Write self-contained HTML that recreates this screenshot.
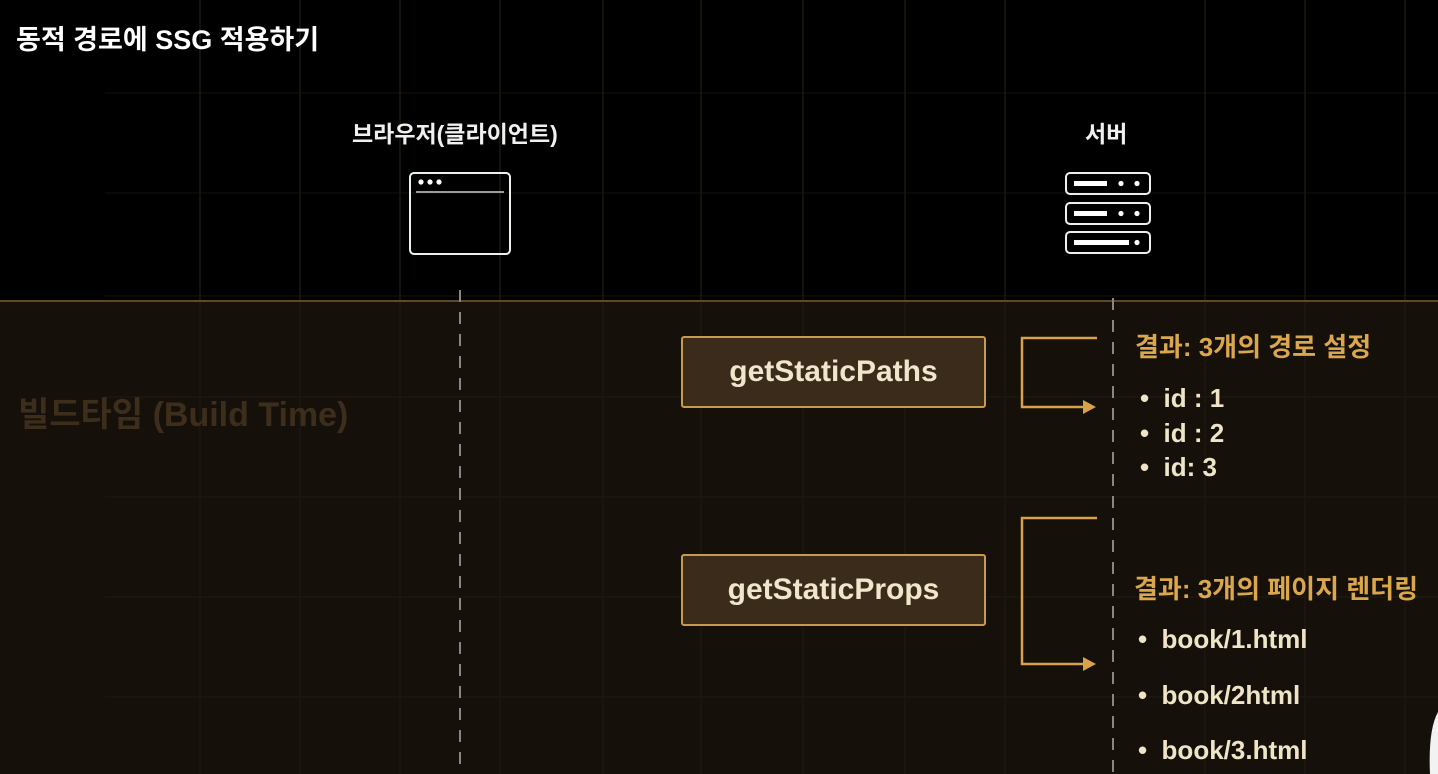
<!DOCTYPE html>
<html><head><meta charset="utf-8"><style>
html,body{margin:0;padding:0}
body{width:1438px;height:774px;overflow:hidden;background:#000;position:relative;font-family:"Liberation Sans","Noto Sans CJK KR",sans-serif}
.abs{position:absolute;white-space:nowrap}
.bottom{position:absolute;left:0;top:301px;width:1438px;height:473px;background:#16100b}
.box{position:absolute;left:681px;width:301px;height:68px;border:2px solid #c99a4e;border-radius:3px;background:#3a2b1b;color:#f0e6cc;font-size:30px;font-weight:bold;display:flex;align-items:center;justify-content:center}
.gold{color:#dba74c;font-weight:bold;font-size:26px}
.it{color:#efe4c6;font-size:26px;font-weight:bold}
</style></head><body>
<div class="bottom"></div>
<svg class="abs" style="left:0;top:0" width="1438" height="774">
<g stroke="#0d0c0a" stroke-width="1.5">
<line x1="105" y1="93" x2="1438" y2="93"/><line x1="105" y1="193" x2="1438" y2="193"/><line x1="105" y1="296" x2="1438" y2="296"/>
</g>
<g stroke="#1e170f" stroke-width="1.5">
<line x1="105" y1="397" x2="1438" y2="397"/><line x1="105" y1="497" x2="1438" y2="497"/><line x1="105" y1="597" x2="1438" y2="597"/><line x1="105" y1="697" x2="1438" y2="697"/>
<line x1="200" y1="0" x2="200" y2="774"/><line x1="300" y1="0" x2="300" y2="774"/><line x1="400" y1="0" x2="400" y2="774"/><line x1="500" y1="0" x2="500" y2="774"/><line x1="603" y1="0" x2="603" y2="774"/><line x1="701" y1="0" x2="701" y2="774"/><line x1="803" y1="0" x2="803" y2="774"/><line x1="905" y1="0" x2="905" y2="774"/><line x1="1005" y1="0" x2="1005" y2="774"/><line x1="1205" y1="0" x2="1205" y2="774"/><line x1="1305" y1="0" x2="1305" y2="774"/><line x1="1405" y1="0" x2="1405" y2="774"/>
</g>
<line x1="0" y1="301" x2="1438" y2="301" stroke="#5e4826" stroke-width="2"/>
<line x1="460" y1="290" x2="460" y2="774" stroke="#8a8680" stroke-width="2" stroke-dasharray="12,10"/>
<line x1="1113" y1="298" x2="1113" y2="774" stroke="#8a8680" stroke-width="2" stroke-dasharray="12,10"/>
<g stroke="#d7a24a" stroke-width="2.5" fill="none">
<path d="M1097 338 H1022 V407 H1085"/>
<path d="M1097 518 H1022 V664 H1085"/>
</g>
<path d="M1083 400 L1096 407 L1083 414Z" fill="#d7a24a"/>
<path d="M1083 657 L1096 664 L1083 671Z" fill="#d7a24a"/>
<rect x="410" y="173" width="100" height="81" rx="4" fill="none" stroke="#eee" stroke-width="2"/>
<line x1="416" y1="192" x2="504" y2="192" stroke="#ccc" stroke-width="1.5"/>
<circle cx="421" cy="182" r="2.6" fill="#fff"/><circle cx="430" cy="182" r="2.6" fill="#fff"/><circle cx="439" cy="182" r="2.6" fill="#fff"/>
<g fill="none" stroke="#eee" stroke-width="2">
<rect x="1066" y="173" width="84" height="21" rx="4"/><rect x="1066" y="203" width="84" height="21" rx="4"/><rect x="1066" y="232" width="84" height="21" rx="4"/>
</g>
<g fill="#fff">
<rect x="1074" y="181" width="33" height="5"/><circle cx="1121" cy="183.5" r="2.6"/><circle cx="1137" cy="183.5" r="2.6"/>
<rect x="1074" y="211" width="33" height="5"/><circle cx="1121" cy="213.5" r="2.6"/><circle cx="1137" cy="213.5" r="2.6"/>
<rect x="1074" y="240" width="55" height="5"/><circle cx="1137" cy="242.5" r="2.6"/>
</g>
<path d="M1438 712 Q1428 730 1430 774 L1438 774Z" fill="#f2f2f2"/>
</svg>
<div class="abs" style="left:16px;top:18px;color:#fff;font-weight:bold;font-size:27px">동적 경로에 SSG 적용하기</div>
<div class="abs" style="left:352px;top:115px;color:#f0f0f0;font-size:23px;font-weight:bold">브라우저(클라이언트)</div>
<div class="abs" style="left:1085px;top:115px;color:#f0f0f0;font-size:23px;font-weight:bold">서버</div>
<div class="abs" style="left:18px;top:387px;color:#3d2e1c;font-weight:bold;font-size:34px">빌드타임 (Build Time)</div>
<div class="box" style="top:336px">getStaticPaths</div>
<div class="box" style="top:554px">getStaticProps</div>
<div class="abs gold" style="left:1135px;top:327px">결과: 3개의 경로 설정</div>
<div class="abs it" style="left:1140px;top:383px">• &nbsp;id : 1</div>
<div class="abs it" style="left:1140px;top:418px">• &nbsp;id : 2</div>
<div class="abs it" style="left:1140px;top:452px">• &nbsp;id: 3</div>
<div class="abs gold" style="left:1134px;top:569px">결과: 3개의 페이지 렌더링</div>
<div class="abs it" style="left:1138px;top:624px">• &nbsp;book/1.html</div>
<div class="abs it" style="left:1138px;top:680px">• &nbsp;book/2html</div>
<div class="abs it" style="left:1138px;top:735px">• &nbsp;book/3.html</div>
</body></html>
